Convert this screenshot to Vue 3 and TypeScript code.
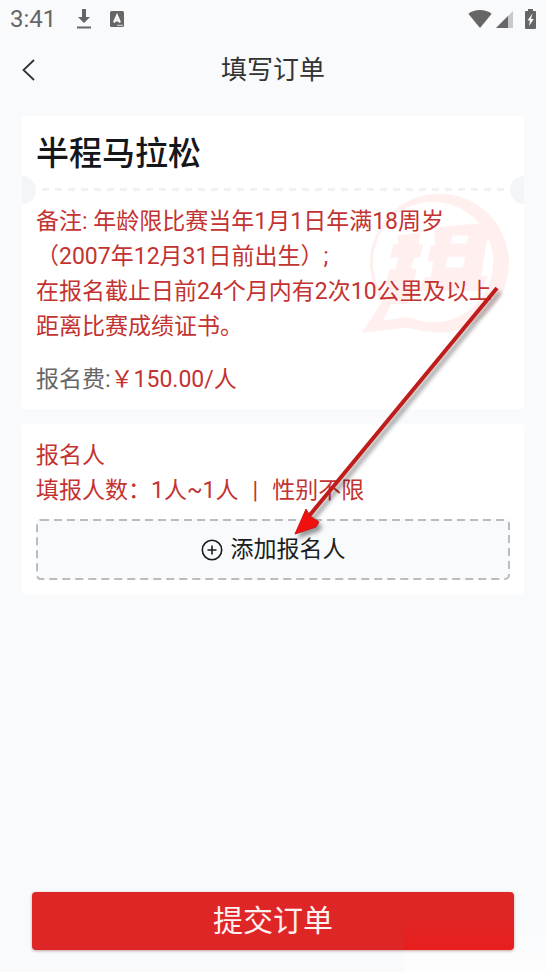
<script setup lang="ts">
import { ref } from 'vue'

const clock = ref('3:41')
const raceName = ref('半程马拉松')
const remarks = ref<string[]>([
  '备注: 年龄限比赛当年1月1日年满18周岁',
  '（2007年12月31日前出生）;',
  '在报名截止日前24个月内有2次10公里及以上',
  '距离比赛成绩证书。',
])
const price = ref('￥150.00/人')
const quota = ref<string[]>(['填报人数：1人~1人', '|', '性别不限'])
</script>

<template>
  <div class="page">
    <div class="status">
      <span class="clock">{{ clock }}</span>
      <svg class="download" width="16" height="22" viewBox="0 0 16 22" aria-hidden="true">
        <path d="M6 1h4v8h4l-6 6-6-6h4z" fill="#666" />
        <path d="M1 19.5h14" stroke="#666" stroke-width="2" />
      </svg>
      <svg class="app-badge" width="14" height="16" viewBox="0 0 14 16" aria-hidden="true">
        <rect width="14" height="16" rx="1.5" fill="#666" />
        <path d="M4 11.500 7 4.500l3 7M5 9.500h4" fill="none" stroke="#fff" stroke-width="2" />
        <path d="M7 14.3h6" stroke="#ddd" stroke-width="1" />
      </svg>
      <svg class="wifi" width="24" height="18" viewBox="0 0 24 18" aria-hidden="true">
        <path d="M12 18 .3 3.7C3.6 1.2 7.600 0 12 0s8.400 1.200 11.700 3.700z" fill="#666" />
      </svg>
      <svg class="signal" width="17" height="18" viewBox="0 0 17 18" aria-hidden="true">
        <path d="M0 18 17 1v17z" fill="#c8c8ca" />
        <path d="M0 18 12 6v12z" fill="#666" />
      </svg>
      <svg class="battery" width="11" height="20" viewBox="0 0 11 20" aria-hidden="true">
        <path d="M3 0h5v2h2a1 1 0 0 1 1 1v16a1 1 0 0 1-1 1H1a1 1 0 0 1-1-1V3a1 1 0 0 1 1-1h2z" fill="#666" />
        <path d="M7.500 4.500 2.500 11.500h2.500L4 17l4.800-7H6z" fill="#fff" />
      </svg>
    </div>

    <header class="nav">
      <button class="back" type="button" aria-label="返回">
        <svg class="chevron" width="13" height="22" viewBox="0 0 13 22" aria-hidden="true">
          <path d="M12 1 1.500 11 12 21" fill="none" stroke="#333" stroke-width="1.800" />
        </svg>
      </button>
      <h1 class="nav-title">填写订单</h1>
    </header>

    <main class="content">
      <section class="card race">
        <svg class="watermark" width="150" height="143" viewBox="60 60 450 430" aria-hidden="true">
          <g fill="#fff0ef">
            <path
              d="M125 394A209 209 0 1 1 299 486q-50-3-100-15L65 487zM152 402l-22 47 76-10A181 181 0 1 0 152 402z"
              fill-rule="evenodd"
            />
            <path
              d="M172 194l70-10-7 36h15l-10 40h-18l-8 34h16l-14 54h-4l-9 52h-70l9-52h-8l14-52h18l8-36h-24l10-40h14z"
            />
            <path
              d="M282 169l172-14-16 72-14 88h20l-20 46H238l16-42h18l8-48h-18l10-46h14zM338 194l-5 24h48l5-24zM324 258l-7 32h52l7-32z"
              fill-rule="evenodd"
            />
          </g>
        </svg>
        <h2 class="race-name">{{ raceName }}</h2>
        <div class="tear"></div>
        <div class="remarks">
          <p v-for="line in remarks" :key="line" class="line">{{ line }}</p>
        </div>
        <p class="line fee">报名费:<strong class="price">{{ price }}</strong></p>
      </section>

      <section class="card people">
        <h3 class="line">报名人</h3>
        <p class="line quota"><span v-for="part in quota" :key="part">{{ part }}</span></p>
        <button class="add" type="button">
          <svg class="outline" aria-hidden="true">
            <rect class="dash" x="1" y="1" rx="4" />
          </svg>
          <svg width="22" height="22" viewBox="0 0 22 22" aria-hidden="true">
            <circle cx="11" cy="11" r="9.700" fill="none" stroke="#1b1d20" stroke-width="1.600" />
            <path d="M11 6.500v9M6.500 11h9" stroke="#1b1d20" stroke-width="1.600" />
          </svg>
          <span>添加报名人</span>
        </button>
      </section>

      <svg class="arrow" width="216" height="260" viewBox="0 0 216 260" aria-hidden="true">
        <path d="M206 7 18 235" stroke="#c01c1c" stroke-width="4" />
        <path d="M4 253 15 228l4 7 9 6-3 5z" fill="#f01010" stroke="#c81818" stroke-width="1" />
      </svg>
    </main>

    <footer class="footer">
      <button class="submit" type="button">提交订单</button>
    </footer>
  </div>
</template>

<style>
body {
  margin: 0;
  background: #f8fafc;
}
</style>

<style scoped>
.page {
  display: flex;
  flex-direction: column;
  min-height: 100vh;
  background: #f8fafc;
  color: #c33331;
  font-family: Roboto, "Noto Sans CJK SC", sans-serif;
}

.status {
  display: flex;
  align-items: center;
  height: 38px;
  padding: 0 10px;
  box-sizing: border-box;
}

.clock {
  color: #666;
  font-size: 24px;
  line-height: 38px;
}

.download {
  margin-left: 20px;
}

.app-badge {
  margin-left: 18px;
}

.wifi {
  margin-left: auto;
}

.signal {
  margin-left: 4px;
}

.battery {
  margin-left: 12px;
}

.nav {
  display: grid;
  grid-template-columns: 56px 1fr 56px;
  align-items: center;
  height: 64px;
}

.back {
  display: flex;
  padding: 8px 22px;
  border: 0;
  background: none;
}

.chevron {
  flex: none;
}

.nav-title {
  margin: 0;
  color: #333;
  font-size: 26px;
  font-weight: 400;
  line-height: 36px;
  text-align: center;
}

.content {
  position: relative;
  display: flex;
  flex-direction: column;
  gap: 15px;
  padding: 14px 22px;
}

.card {
  position: relative;
  padding: 0 14px;
  border-radius: 4px;
  background: #fff;
}

.race {
  padding-bottom: 12px;
  overflow: hidden;
}

.watermark {
  position: absolute;
  top: 75px;
  right: 14px;
}

.race-name {
  position: relative;
  margin: 0;
  padding-top: 16px;
  color: #15171a;
  font-size: 33px;
  font-weight: 500;
  line-height: 44px;
}

.tear {
  position: relative;
  height: 28px;
  margin: 0 -14px;
  background: repeating-linear-gradient(to right, #f0f1f3 0 7px, transparent 7px 13px) 20px 12px / calc(100% - 40px) 3px no-repeat;
}

.tear::before,
.tear::after {
  content: "";
  position: absolute;
  top: 0;
  width: 28px;
  height: 28px;
  border-radius: 50%;
  background: #f3f5f8;
}

.tear::before {
  left: -14px;
}

.tear::after {
  right: -14px;
}

.remarks {
  position: relative;
}

.line {
  margin: 0;
  font-size: 23px;
  font-weight: 400;
  line-height: 35px;
  white-space: nowrap;
}

.fee {
  padding-top: 18px;
  color: #666;
}

.price {
  color: #c33331;
  font-weight: 400;
}

.people {
  padding-top: 14px;
  padding-bottom: 15px;
}

.quota {
  display: flex;
  gap: 14px;
}

.add {
  position: relative;
  display: flex;
  align-items: center;
  justify-content: center;
  gap: 8px;
  width: 100%;
  height: 61px;
  margin-top: 11px;
  padding: 0;
  border: 0;
  border-radius: 4px;
  background: #f8fafc;
  color: #1b1d20;
  font-family: inherit;
  font-size: 23px;
  line-height: 35px;
}

.outline {
  position: absolute;
  inset: 0;
  width: 100%;
  height: 100%;
}

.dash {
  width: calc(100% - 2px);
  height: calc(100% - 2px);
  fill: none;
  stroke: #bbbcbe;
  stroke-width: 2px;
  stroke-dasharray: 8px 5px;
}

.arrow {
  position: absolute;
  top: 179px;
  left: 291px;
  filter: drop-shadow(3px 4px 2px rgba(0, 0, 0, 0.4));
  pointer-events: none;
}

.footer {
  margin-top: auto;
  padding: 16px 32px 22px;
  background: linear-gradient(to bottom, transparent, #fdfdfd) right bottom / 142px 56px no-repeat;
}

.submit {
  display: block;
  width: 100%;
  height: 58px;
  padding: 0;
  border: 0;
  border-radius: 4px;
  background: linear-gradient(to bottom, #df2626, #e91e1e) right bottom / 111px 35px no-repeat #df2626;
  box-shadow: 0 1px 3px rgba(120, 30, 30, 0.4);
  color: #fff0f0;
  font-family: inherit;
  font-size: 30px;
  line-height: 58px;
}
</style>
